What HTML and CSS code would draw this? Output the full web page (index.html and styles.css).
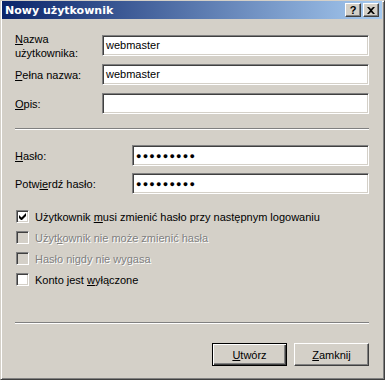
FILE: index.html
```html
<!DOCTYPE html>
<html>
<head>
    <title>Nowy użytkownik</title>
    <link rel="stylesheet" href="styles.css">
</head>
<body>
    <div class="window">
        <div class="title-bar">
            <span class="title-text">Nowy użytkownik</span>
            <div class="title-buttons">
                <span class="title-button help">?</span>
                <span class="title-button close">
                    <svg width="8" height="7" viewBox="0 0 8 7"><path d="M0 0h2l2 2 2-2h2L5 3.5 8 7H6L4 5 2 7H0l3-3.5z" fill="#000"/></svg>
                </span>
            </div>
        </div>

        <div class="content">
            <div class="row">
                <label class="label"><u>N</u>azwa<br>użytkownika:</label>
                <div class="field">webmaster</div>
            </div>
            <div class="row">
                <label class="label"><u>P</u>ełna nazwa:</label>
                <div class="field">webmaster</div>
            </div>
            <div class="row">
                <label class="label"><u>O</u>pis:</label>
                <div class="field"></div>
            </div>

            <div class="separator sep-top"></div>

            <div class="row">
                <label class="label label-wide"><u>H</u>asło:</label>
                <div class="field pass">●●●●●●●●●</div>
            </div>
            <div class="row row-pass2">
                <label class="label label-wide">Potw<u>ie</u>rdź hasło:</label>
                <div class="field pass">●●●●●●●●●</div>
            </div>

            <div class="checks">
                <div class="check">
                    <span class="box">
                        <svg width="7" height="7" viewBox="0 0 7 7"><path d="M0 2v3l2 2h1l4-4V0L2.5 4.5z" fill="#000"/></svg>
                    </span>
                    <span>Użytkownik <u>m</u>usi zmienić hasło przy następnym logowaniu</span>
                </div>
                <div class="check disabled">
                    <span class="box"></span>
                    <span>Użyt<u>k</u>ownik nie może zmienić hasła</span>
                </div>
                <div class="check disabled">
                    <span class="box"></span>
                    <span>Hasło nigdy nie wygasa</span>
                </div>
                <div class="check">
                    <span class="box"></span>
                    <span>Konto jest <u>w</u>yłączone</span>
                </div>
            </div>

            <div class="separator sep-bottom"></div>

            <div class="buttons">
                <button class="button default"><u>U</u>twórz</button>
                <button class="button"><u>Z</u>amknij</button>
            </div>
        </div>
    </div>
</body>
</html>
```

FILE: styles.css
```css
body {
    margin: 0;
    font-family: 'Liberation Sans', Arial, sans-serif;
    font-size: 11px;
    color: #000000;
    background-color: #d4d0c8;
}

.window {
    width: 385px;
    height: 380px;
    box-sizing: border-box;
    background-color: #d4d0c8;
    border-top: 1px solid #d4d0c8;
    border-left: 1px solid #d4d0c8;
    border-right: 1px solid #404040;
    border-bottom: 1px solid #404040;
    box-shadow: inset 1px 1px #ffffff, inset -1px -1px #808080;
    padding: 0 2px;
}

.title-bar {
    height: 18px;
    display: flex;
    align-items: center;
    justify-content: space-between;
    background: linear-gradient(to right, #0a246a, #a6caf0);
    padding: 0 3px 0 3px;
    margin-left: -1px;
}

.title-text {
    color: #ffffff;
    font-family: 'DejaVu Sans', Verdana, sans-serif;
    font-weight: bold;
    font-size: 11px;
}

.title-buttons {
    display: flex;
    gap: 2px;
}

.title-button {
    width: 16px;
    height: 14px;
    box-sizing: border-box;
    background-color: #d4d0c8;
    border-top: 1px solid #ffffff;
    border-left: 1px solid #ffffff;
    border-right: 1px solid #404040;
    border-bottom: 1px solid #404040;
    box-shadow: inset -1px -1px #808080;
    display: flex;
    align-items: center;
    justify-content: center;
    font-weight: bold;
    font-size: 11px;
    line-height: 1;
}

.content {
    display: flex;
    flex-direction: column;
    padding: 16px 13px 0 12px;
}

.row {
    display: flex;
    align-items: center;
    height: 21px;
    margin-bottom: 8px;
}

.label {
    width: 87px;
    flex-shrink: 0;
    line-height: 14px;
}

.label-wide {
    width: 117px;
}

.field {
    flex: 1;
    height: 21px;
    box-sizing: border-box;
    background-color: #ffffff;
    border-top: 1px solid #808080;
    border-left: 1px solid #808080;
    border-right: 1px solid #ffffff;
    border-bottom: 1px solid #ffffff;
    box-shadow: inset 1px 1px #404040, inset -1px -1px #d4d0c8;
    padding: 3px 3px 0 3px;
    line-height: 13px;
}

.pass {
    font-size: 9px;
    letter-spacing: 1.25px;
    padding-top: 4px;
    padding-left: 3px;
}

.separator {
    height: 0;
    flex-shrink: 0;
    border-top: 1px solid #808080;
    border-bottom: 1px solid #ffffff;
}

.sep-top {
    margin: 6px 0 15px 0;
}

.row-pass2 {
    margin-bottom: 0;
    margin-top: -1px;
}

.checks {
    margin-top: 12px;
}

.check {
    display: flex;
    align-items: center;
    height: 21px;
    gap: 6px;
    padding-left: 1px;
}

.box {
    width: 13px;
    height: 13px;
    box-sizing: border-box;
    background-color: #ffffff;
    border-top: 1px solid #808080;
    border-left: 1px solid #808080;
    border-right: 1px solid #ffffff;
    border-bottom: 1px solid #ffffff;
    box-shadow: inset 1px 1px #404040, inset -1px -1px #d4d0c8;
    display: flex;
    align-items: center;
    justify-content: center;
    flex-shrink: 0;
}

.check.disabled {
    color: #808080;
    text-shadow: 1px 1px #ffffff;
}

.check.disabled .box {
    background-color: #d4d0c8;
}

.sep-bottom {
    margin-top: 32px;
}

.buttons {
    display: flex;
    justify-content: flex-end;
    gap: 7px;
    margin-top: 19px;
}

.button {
    width: 75px;
    height: 23px;
    box-sizing: border-box;
    font-family: 'Liberation Sans', Arial, sans-serif;
    font-size: 11px;
    color: #000000;
    background-color: #d4d0c8;
    border-top: 1px solid #ffffff;
    border-left: 1px solid #ffffff;
    border-right: 1px solid #404040;
    border-bottom: 1px solid #404040;
    box-shadow: inset -1px -1px #808080;
    padding: 0;
}

.button.default {
    border: 1px solid #000000;
    box-shadow: inset 1px 1px #ffffff, inset -1px -1px #404040, inset -2px -2px #808080;
}
```
